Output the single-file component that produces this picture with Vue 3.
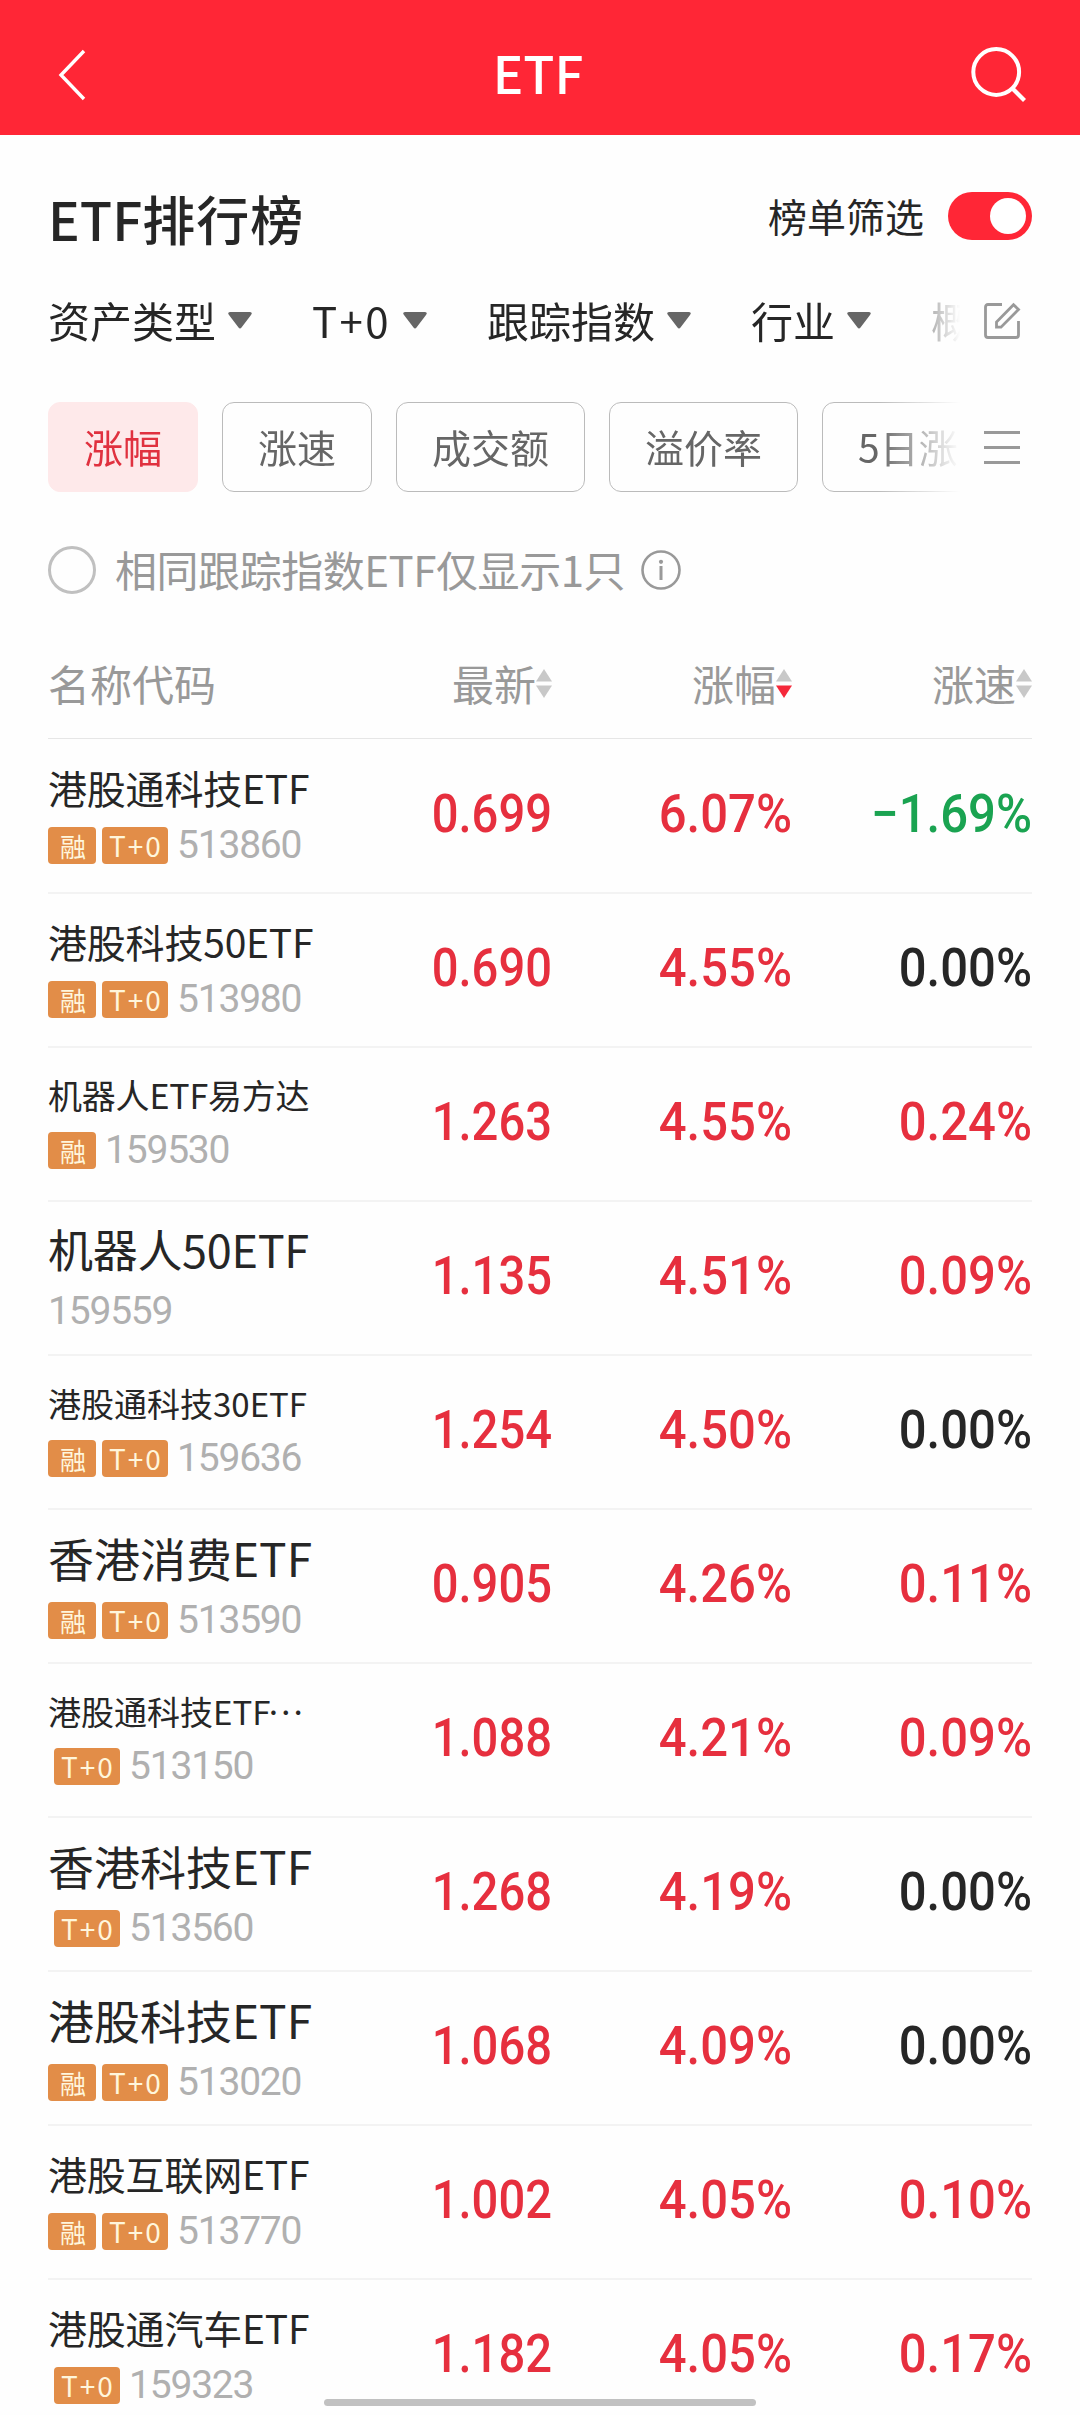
<template>
  <div class="page">
    <header class="nav">
      <svg class="nav__back" viewBox="0 0 30 54" fill="none">
        <path d="M26 3 L3 27 L26 51" stroke="#fff" stroke-width="3.4" />
      </svg>
      <h1 class="nav__title">ETF</h1>
      <svg class="nav__search" viewBox="0 0 60 60" fill="none">
        <circle cx="26.200" cy="27" r="22.900" stroke="#fff" stroke-width="4" />
        <path d="M42.500 43.500 L54.500 55.500" stroke="#fff" stroke-width="4.200" />
      </svg>
    </header>

    <section class="heading">
      <h2 class="heading__title">ETF<span class="heading__cjk">排行榜</span></h2>
      <div class="heading__filter">
        <span class="heading__label">榜单筛选</span>
        <button class="switch" :class="{ 'switch--on': filterOn }" @click="filterOn = !filterOn">
          <i class="switch__knob"></i>
        </button>
      </div>
    </section>

    <div class="bar filters">
      <div class="bar__scroll filters__list">
        <div v-for="f in filters" :key="f" class="filters__item">
          <span :class="{ 'filters__latin': f === 'T+0' }">{{ f }}</span>
          <svg class="filters__arrow" viewBox="0 0 24 17">
            <path d="M2 0 H22 Q25 0.500 23 3 L13.500 15.500 Q12 17.500 10.500 15.500 L1 3 Q-1 0.500 2 0 Z" fill="#666" />
          </svg>
        </div>
      </div>
      <svg class="bar__icon" viewBox="0 0 36 36" fill="none" stroke="#999" stroke-width="2.8">
        <path d="M18 1.500 H4 Q1.500 1.500 1.500 4 V32 Q1.500 34.500 4 34.500 H32 Q34.500 34.500 34.500 32 V18" />
        <path d="M12.500 24.200 V19 L29.500 1.800 L34.500 6.500 L17 24.200 Z" />
      </svg>
    </div>

    <div class="bar tabs">
      <div class="bar__scroll tabs__list">
        <button v-for="t in tabs" :key="t" class="tab" :class="{ 'tab--active': t === activeTab }"
                @click="activeTab = t">{{ t }}</button>
      </div>
      <svg class="bar__icon" viewBox="0 0 36 36" stroke="#999" stroke-width="2.800">
        <path d="M0 3.500 H36 M0 18.500 H36 M0 33.500 H36" />
      </svg>
    </div>

    <div class="only-one">
      <i class="only-one__radio"></i>
      <span class="only-one__text">相同跟踪指数ETF仅显示1只</span>
      <svg class="only-one__info" viewBox="0 0 40 40" fill="none">
        <circle cx="20" cy="20" r="18.500" stroke="#999" stroke-width="2.600" />
        <path d="M20 16 V30" stroke="#999" stroke-width="3" />
        <circle cx="20" cy="11.800" r="2.100" fill="#999" />
      </svg>
    </div>

    <div class="grid thead">
      <span>名称代码</span>
      <div v-for="c in columns" :key="c.label" class="thead__sort">
        <span>{{ c.label }}</span>
        <svg class="thead__arrows" viewBox="0 0 16 29">
          <path d="M8 0 L16 12.500 H0 Z" fill="#c8c8c8" />
          <path d="M0 16.500 H16 L8 29 Z" :fill="c.desc ? '#f5283a' : '#c8c8c8'" />
        </svg>
      </div>
    </div>

    <ul class="list">
      <li v-for="row in rows" :key="row.code" class="grid row">
        <div class="fund">
          <div class="fund__name" :class="`fund__name--${row.size}`">
            {{ row.name }}<span v-if="row.clipped" class="fund__more">…</span>
          </div>
          <div class="fund__meta">
            <span v-if="row.margin" class="tag tag--margin">融</span>
            <span v-if="row.t0" class="tag tag--t0">T+0</span>
            <span class="fund__code">{{ row.code }}</span>
          </div>
        </div>
        <span class="num num--price up">{{ row.price }}</span>
        <span class="num up">{{ row.change }}</span>
        <span class="num" :class="trend(row.speed)">{{ row.speed }}</span>
      </li>
    </ul>

    <i class="home-bar"></i>
  </div>
</template>

<script setup>
import { ref } from 'vue'

const filterOn = ref(true)
const activeTab = ref('涨幅')

const filters = ['资产类型', 'T+0', '跟踪指数', '行业', '概念']
const tabs = ['涨幅', '涨速', '成交额', '溢价率', '5日涨幅']
const columns = [
  { label: '最新', desc: false },
  { label: '涨幅', desc: true },
  { label: '涨速', desc: false },
]

// size: 名称过长时逐级缩小字号; clipped: 仍放不下则加省略号
const rows = [
  { name: '港股通科技ETF', size: 'md', margin: true, t0: true, code: '513860', price: '0.699', change: '6.07%', speed: '−1.69%' },
  { name: '港股科技50ETF', size: 'md', margin: true, t0: true, code: '513980', price: '0.690', change: '4.55%', speed: '0.00%' },
  { name: '机器人ETF易方达', size: 'sm', margin: true, t0: false, code: '159530', price: '1.263', change: '4.55%', speed: '0.24%' },
  { name: '机器人50ETF', size: 'lg', margin: false, t0: false, code: '159559', price: '1.135', change: '4.51%', speed: '0.09%' },
  { name: '港股通科技30ETF', size: 'xs', margin: true, t0: true, code: '159636', price: '1.254', change: '4.50%', speed: '0.00%' },
  { name: '香港消费ETF', size: 'xl', margin: true, t0: true, code: '513590', price: '0.905', change: '4.26%', speed: '0.11%' },
  { name: '港股通科技ETF', clipped: true, size: 'xs', margin: false, t0: true, code: '513150', price: '1.088', change: '4.21%', speed: '0.09%' },
  { name: '香港科技ETF', size: 'xl', margin: false, t0: true, code: '513560', price: '1.268', change: '4.19%', speed: '0.00%' },
  { name: '港股科技ETF', size: 'xl', margin: true, t0: true, code: '513020', price: '1.068', change: '4.09%', speed: '0.00%' },
  { name: '港股互联网ETF', size: 'md', margin: true, t0: true, code: '513770', price: '1.002', change: '4.05%', speed: '0.10%' },
  { name: '港股通汽车ETF', size: 'md', margin: false, t0: true, code: '159323', price: '1.182', change: '4.05%', speed: '0.17%' },
]

function trend(value) {
  if (value.startsWith('−')) return 'down'
  return parseFloat(value) > 0 ? 'up' : 'flat'
}
</script>

<style>
body {
  margin: 0;
  background: #fefefe;
}
</style>

<style scoped>
.page {
  position: relative;
  width: 1080px;
  height: 2415px;
  overflow: hidden;
  background: #fefefe;
  color: #262626;
  font-family: "Noto Sans CJK SC", sans-serif;
}

h1,
h2,
ul {
  margin: 0;
  padding: 0;
}

h1,
h2 {
  font-weight: 500;
}

button {
  font-family: inherit;
}

/* 顶部导航 */
.nav {
  box-sizing: border-box;
  height: 135px;
  padding: 15px 50px 0 58px;
  display: flex;
  align-items: center;
  justify-content: space-between;
  background: #ff2636;
}

.nav__back {
  width: 30px;
  height: 54px;
}

.nav__title {
  color: #fff;
  font-size: 51px;
  line-height: 60px;
  padding: 0 0 7px 18px;
}

.nav__search {
  width: 60px;
  height: 60px;
}

/* 标题 */
.heading {
  height: 156px;
  padding: 0 48px;
  display: flex;
  justify-content: space-between;
}

.heading__title {
  font-size: 53px;
  line-height: 80px;
  padding-top: 43px;
}

.heading__cjk {
  letter-spacing: 1px;
}

.heading__filter {
  display: flex;
  align-items: center;
  gap: 24px;
  height: 60px;
  padding-top: 51px;
  font-size: 39px;
}

.heading__label {
  padding-bottom: 3px;
}

.switch {
  width: 84px;
  height: 48px;
  padding: 6px;
  border: 0;
  border-radius: 24px;
  background: #ccc;
  display: flex;
}

.switch--on {
  background: #ff2636;
  justify-content: flex-end;
}

.switch__knob {
  width: 36px;
  height: 36px;
  border-radius: 50%;
  background: #fff;
}

/* 横向滚动栏 */
.bar {
  display: flex;
  align-items: center;
  padding: 0 60px 0 48px;
}

.bar__scroll {
  width: 912px;
  flex-shrink: 0;
  display: flex;
  overflow: hidden;
  white-space: nowrap;
  -webkit-mask-image: linear-gradient(to right, #000 830px, transparent 912px);
  mask-image: linear-gradient(to right, #000 830px, transparent 912px);
}

.bar__icon {
  width: 36px;
  height: 36px;
  margin-left: 24px;
  flex-shrink: 0;
  overflow: visible;
}

.filters {
  height: 60px;
  font-size: 42px;
  line-height: 61px;
}

.filters__list {
  gap: 60px;
  padding-bottom: 3px;
}

.filters__item {
  display: flex;
  align-items: center;
  gap: 12px;
  flex-shrink: 0;
}

.filters__latin {
  letter-spacing: 2.4px;
}

.filters__arrow {
  width: 24px;
  height: 17px;
  padding-top: 2px;
}

.tabs {
  height: 90px;
  margin-top: 51px;
}

.tabs__list {
  gap: 24px;
}

.tab {
  box-sizing: border-box;
  height: 90px;
  padding: 0 35px 3px;
  flex-shrink: 0;
  border: 1px solid #bbb;
  border-radius: 12px;
  background: transparent;
  color: #666;
  font-size: 39px;
}

.tab--active {
  border-color: #fee9ea;
  background: #fee9ea;
  color: #e0313f;
}

.only-one {
  height: 60px;
  margin-top: 48px;
  padding: 0 48px;
  display: flex;
  align-items: center;
  color: #999;
  font-size: 42px;
  line-height: 60px;
}

.only-one__radio {
  box-sizing: border-box;
  width: 48px;
  height: 48px;
  margin-right: 19px;
  border: 3px solid #c0c0c0;
  border-radius: 50%;
}

.only-one__text {
  letter-spacing: -0.45px;
  padding-bottom: 3px;
}

.only-one__info {
  width: 40px;
  height: 40px;
  margin-left: 16px;
}

/* 表格 */
.grid {
  display: grid;
  grid-template-columns: 264px 240px 240px 240px;
  margin: 0 48px;
}

.thead {
  box-sizing: border-box;
  height: 139px;
  padding-top: 30px;
  border-bottom: 1px solid #e6e6e6;
  color: #999;
  font-size: 42px;
  line-height: 106px;
}

.thead__sort {
  display: flex;
  justify-content: flex-end;
  align-items: center;
  height: 106px;
}

.thead__arrows {
  width: 16px;
  height: 29px;
}

.list {
  list-style: none;
}

.row {
  box-sizing: border-box;
  height: 154px;
  border-bottom: 2px solid #f3f3f3;
}

.row:first-child {
  height: 155px;
  padding-top: 1px;
}

.row:last-child {
  border-bottom: 0;
}

.fund {
  padding-top: 17px;
  white-space: nowrap;
}

.fund__name {
  height: 60px;
  line-height: 60px;
}

.fund__name--xs {
  font-size: 33px;
  margin-bottom: 7px;
}

.fund__name--sm {
  font-size: 34px;
  letter-spacing: -0.2px;
  margin-bottom: 7px;
}

.fund__name--md {
  font-size: 39px;
  letter-spacing: -0.2px;
  margin-bottom: 10px;
}

.fund__name--lg {
  font-size: 45px;
  letter-spacing: -0.3px;
  margin-bottom: 14px;
}

.fund__name--xl {
  font-size: 46px;
  margin-bottom: 15px;
}

/* 省略号抬到字面中线 */
.fund__more {
  position: relative;
  top: -10px;
}

.fund__meta {
  display: flex;
  height: 37px;
}

.tag {
  box-sizing: border-box;
  height: 37px;
  line-height: 37px;
  border-radius: 4px;
  background: #e28d48;
  color: #fff6dc;
  text-align: center;
}

.tag--margin {
  width: 48px;
  font-size: 26px;
  padding-left: 2px;
}

.tag--t0 {
  width: 66px;
  margin-left: 6px;
  font-size: 28px;
  letter-spacing: 2px;
  padding-left: 2px;
}

.fund__code {
  color: #b0b0b0;
  font-family: Roboto, sans-serif;
  font-size: 39px;
  font-weight: 400;
  line-height: 36px;
  letter-spacing: -1.2px;
}

.tag + .fund__code {
  margin-left: 9px;
}

/* 数字略微压窄 */
.num {
  font-family: Roboto, sans-serif;
  font-size: 53px;
  font-weight: 500;
  line-height: 149px;
  text-align: right;
  transform: scaleX(0.925);
  transform-origin: right center;
}

.num--price {
  transform: scaleX(0.89);
}

.up {
  color: #e62f3e;
}

.down {
  color: #1aa351;
}

.flat {
  color: #262626;
}

.home-bar {
  position: absolute;
  left: 324px;
  bottom: 9px;
  width: 432px;
  height: 7px;
  border-radius: 4px;
  background: #c1c1c1;
}
</style>
